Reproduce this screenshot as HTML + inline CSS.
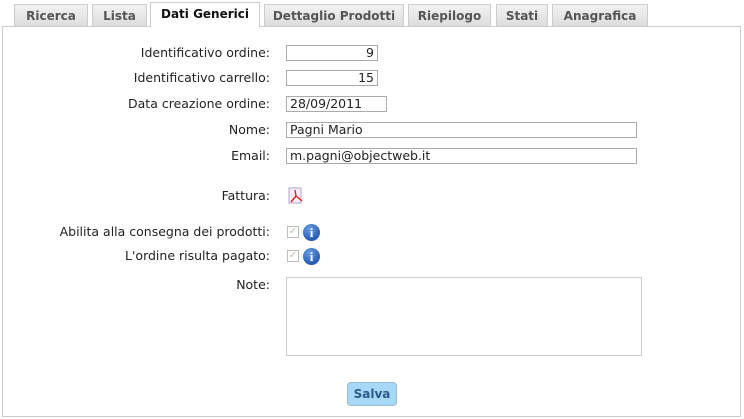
<!DOCTYPE html><html><head><style>
body{margin:0;width:744px;height:419px;background:#fff;font-family:"DejaVu Sans",Verdana,sans-serif;font-size:12.5px;color:#222;position:relative;overflow:hidden}
.tab{position:absolute;top:4px;height:22px;background:linear-gradient(#f2f2f2,#dcdcdc);border:1px solid #ccc;border-bottom:none;font-weight:bold;color:#555;text-align:center;line-height:22px;box-sizing:border-box;font-size:12px}
.tab.a{top:2px;height:25px;background:#fff;color:#111;z-index:2}
.panel{position:absolute;left:2px;top:26px;width:739px;height:391px;border:1px solid #ccc;box-sizing:border-box}
.l{position:absolute;right:474px;white-space:nowrap}
.in{position:absolute;left:286px;height:16px;border:1px solid #aaa;box-sizing:border-box;background:#fff;font-size:12.5px;line-height:14px;padding:0 3px;color:#222}
.r{text-align:right}
.cb{position:absolute;left:287px;width:12px;height:12px;border:1px solid #bbb;box-sizing:border-box;color:#bbb;font-size:10px;line-height:10px;text-align:center}
.i{position:absolute;left:303px;width:17px;height:17px;border-radius:50%;background:radial-gradient(circle at 40% 30%,#6aa0e8,#0b3c9a);color:#fff;font-weight:bold;font-size:13px;line-height:17px;text-align:center;font-family:"Liberation Serif",serif}
</style></head><body>
<div class="tab" style="left:14px;width:74px">Ricerca</div>
<div class="tab" style="left:92px;width:55px">Lista</div>
<div class="tab a" style="left:150px;width:110px">Dati Generici</div>
<div class="tab" style="left:264px;width:140px">Dettaglio Prodotti</div>
<div class="tab" style="left:408px;width:83px">Riepilogo</div>
<div class="tab" style="left:496px;width:52px">Stati</div>
<div class="tab" style="left:552px;width:96px">Anagrafica</div>
<div class="panel"></div>
<div class="l" style="top:45px">Identificativo ordine:</div><div class="in r" style="top:45px;width:92px">9</div>
<div class="l" style="top:70px">Identificativo carrello:</div><div class="in r" style="top:70px;width:92px">15</div>
<div class="l" style="top:96px">Data creazione ordine:</div><div class="in" style="top:96px;width:101px">28/09/2011</div>
<div class="l" style="top:122px">Nome:</div><div class="in" style="top:122px;width:351px">Pagni Mario</div>
<div class="l" style="top:148px">Email:</div><div class="in" style="top:148px;width:351px">m.pagni@objectweb.it</div>
<div class="l" style="top:188px">Fattura:</div>
<svg style="position:absolute;left:288px;top:187px" width="18" height="18"><rect x="1" y="1" width="12" height="15" fill="#f4ecf6" stroke="#b9a3c9"/><path d="M7 3 L8 9 L3 15 M8 9 L14 14" stroke="#e02020" stroke-width="1.4" fill="none"/></svg>
<div class="l" style="top:224px">Abilita alla consegna dei prodotti:</div><div class="cb" style="top:226px">✓</div><div class="i" style="top:224px">i</div>
<div class="l" style="top:248px">L'ordine risulta pagato:</div><div class="cb" style="top:250px">✓</div><div class="i" style="top:248px">i</div>
<div class="l" style="top:277px">Note:</div>
<div style="position:absolute;left:286px;top:277px;width:356px;height:79px;border:1px solid #ccc;box-sizing:border-box"></div>
<div style="position:absolute;left:347px;top:382px;width:50px;height:24px;background:#a8d8f8;border:1px solid #a0b8cc;border-radius:4px;box-sizing:border-box;text-align:center;line-height:22px;font-weight:bold;color:#2a5c8a;font-size:12px">Salva</div>
</body></html>
